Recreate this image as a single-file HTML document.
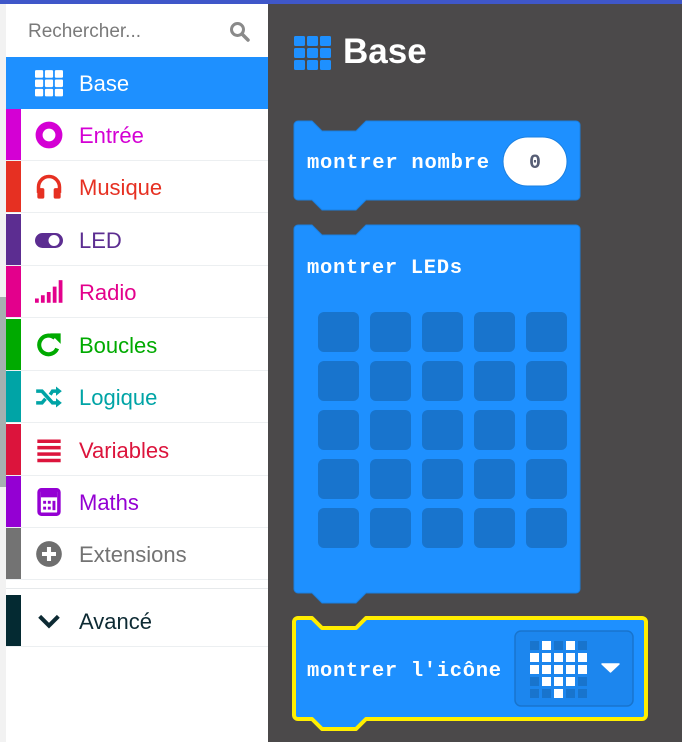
<!DOCTYPE html>
<html><head><meta charset="utf-8"><style>
*{margin:0;padding:0;box-sizing:border-box}
body{width:682px;height:742px;overflow:hidden;background:#4b494a;position:relative;font-family:"Liberation Sans",sans-serif}
#top{position:absolute;left:0;top:0;width:682px;height:4px;background:#3f57c9}
#strip{position:absolute;left:0;top:4px;width:6px;height:738px;background:#f2f2f2}
#scroll{position:absolute;left:0;top:297px;width:6px;height:190px;background:#a6b0b0}
#side{position:absolute;left:6px;top:4px;width:262px;height:738px;background:#fff}
.row{position:absolute;left:6px;width:262px;height:52px;border-bottom:1px solid #eceff1}
.row .bar{position:absolute;left:0;top:0;width:15px;height:100%}
.row .ic{position:absolute;left:29px;top:12px;width:28px;height:28px}
.row .t{position:absolute;left:73px;top:1px;line-height:52px;font-size:22px}
#search{position:absolute;left:28px;top:21px;font-size:19px;color:#7a7a7a}
</style></head><body>
<div id="top"></div><div id="strip"></div><div id="scroll"></div>
<div id="side"></div>
<div id="search">Rechercher...</div>
<svg style="position:absolute;left:229px;top:21px" width="22" height="22" viewBox="0 0 22 22"><circle cx="8.5" cy="8.5" r="6" fill="none" stroke="#8a8a8a" stroke-width="3"/><path d="M13 13l6 6" stroke="#8a8a8a" stroke-width="3.5" stroke-linecap="round"/></svg>

<div class="row" style="top:57px;background:#1e90ff;border:none"><svg class="ic" viewBox="0 0 24 24"><g fill="#fff"><rect x="0" y="1" width="7" height="6.5" rx="1"/><rect x="8.5" y="1" width="7" height="6.5" rx="1"/><rect x="17" y="1" width="7" height="6.5" rx="1"/><rect x="0" y="9" width="7" height="6.5" rx="1"/><rect x="8.5" y="9" width="7" height="6.5" rx="1"/><rect x="17" y="9" width="7" height="6.5" rx="1"/><rect x="0" y="17" width="7" height="6.5" rx="1"/><rect x="8.5" y="17" width="7" height="6.5" rx="1"/><rect x="17" y="17" width="7" height="6.5" rx="1"/></g></svg><span class="t" style="color:#fff">Base</span></div>

<div class="row" style="top:109px"><div class="bar" style="background:#d400d4"></div><svg class="ic" viewBox="0 0 24 24"><circle cx="12" cy="12" r="8.5" fill="none" stroke="#d400d4" stroke-width="6"/></svg><span class="t" style="color:#d400d4">Entrée</span></div>

<div class="row" style="top:161px"><div class="bar" style="background:#e63022"></div><svg class="ic" viewBox="0 0 24 24"><path d="M3 17v-5a9 9 0 0 1 18 0v5" fill="none" stroke="#e63022" stroke-width="3"/><rect x="2" y="13" width="6" height="9" rx="1.5" fill="#e63022"/><rect x="16" y="13" width="6" height="9" rx="1.5" fill="#e63022"/></svg><span class="t" style="color:#e63022">Musique</span></div>

<div class="row" style="top:214px"><div class="bar" style="background:#5c2d91"></div><svg class="ic" viewBox="0 0 28 28"><rect x="0" y="7" width="28" height="15" rx="7.5" fill="#5c2d91"/><circle cx="19" cy="14.5" r="5.5" fill="#fff"/></svg><span class="t" style="color:#5c2d91">LED</span></div>

<div class="row" style="top:266px"><div class="bar" style="background:#e3008c"></div><svg class="ic" viewBox="0 0 26 24"><g fill="#e3008c"><rect x="0" y="18" width="3.5" height="4"/><rect x="5.5" y="15" width="3.5" height="7"/><rect x="11" y="12" width="3.5" height="10"/><rect x="16.5" y="7" width="3.5" height="15"/><rect x="22" y="1" width="3.5" height="21"/></g></svg><span class="t" style="color:#e3008c">Radio</span></div>

<div class="row" style="top:319px"><div class="bar" style="background:#00aa00"></div><svg class="ic" viewBox="0 0 24 24"><path d="M19 15A8 8 0 1 1 17 6" fill="none" stroke="#00aa00" stroke-width="3.5"/><path d="M13 2h9v9z" fill="#00aa00"/></svg><span class="t" style="color:#00aa00">Boucles</span></div>

<div class="row" style="top:371px"><div class="bar" style="background:#00a4a6"></div><svg class="ic" viewBox="0 0 24 24"><path d="M1 7h5l9 10h4M1 17h5l3-3.5M13 10l2-3h4" fill="none" stroke="#00a4a6" stroke-width="3"/><path d="M18 3l5 4-5 4zM18 13l5 4-5 4z" fill="#00a4a6"/></svg><span class="t" style="color:#00a4a6">Logique</span></div>

<div class="row" style="top:424px"><div class="bar" style="background:#dc143c"></div><svg class="ic" viewBox="0 0 24 24"><g fill="#dc143c"><rect x="2" y="3" width="20" height="3"/><rect x="2" y="8.5" width="20" height="3"/><rect x="2" y="14" width="20" height="3"/><rect x="2" y="19.5" width="20" height="3"/></g></svg><span class="t" style="color:#dc143c">Variables</span></div>

<div class="row" style="top:476px"><div class="bar" style="background:#9400d3"></div><svg class="ic" viewBox="0 0 24 24"><rect x="3.5" y="1.5" width="17" height="21" rx="2" fill="none" stroke="#9400d3" stroke-width="3"/><rect x="5" y="3" width="14" height="5" fill="#9400d3"/><g fill="#9400d3"><rect x="7" y="11" width="2.5" height="2.5"/><rect x="11" y="11" width="2.5" height="2.5"/><rect x="15" y="11" width="2.5" height="8"/><rect x="7" y="16" width="2.5" height="2.5"/><rect x="11" y="16" width="2.5" height="2.5"/></g></svg><span class="t" style="color:#9400d3">Maths</span></div>

<div class="row" style="top:528px"><div class="bar" style="background:#737373"></div><svg class="ic" viewBox="0 0 24 24"><circle cx="12" cy="12" r="11" fill="#6f6f6f"/><path d="M12 6v12M6 12h12" stroke="#fff" stroke-width="3.5"/></svg><span class="t" style="color:#737373">Extensions</span></div>

<div style="position:absolute;left:6px;top:588px;width:262px;border-top:1px solid #e6e9eb"></div>
<div class="row" style="top:595px"><div class="bar" style="background:#042a32"></div><svg class="ic" viewBox="0 0 24 24"><path d="M4 8l8 8 8-8" fill="none" stroke="#0d2a33" stroke-width="3.5"/></svg><span class="t" style="color:#0d2a33">Avancé</span></div>

<svg style="position:absolute;left:268px;top:4px" width="414" height="738" viewBox="268 4 414 738">
<g fill="#1e90ff"><rect x="294" y="36" width="11" height="10" rx="1.5"/><rect x="307" y="36" width="11" height="10" rx="1.5"/><rect x="320" y="36" width="11" height="10" rx="1.5"/><rect x="294" y="48" width="11" height="10" rx="1.5"/><rect x="307" y="48" width="11" height="10" rx="1.5"/><rect x="320" y="48" width="11" height="10" rx="1.5"/><rect x="294" y="60" width="11" height="10" rx="1.5"/><rect x="307" y="60" width="11" height="10" rx="1.5"/><rect x="320" y="60" width="11" height="10" rx="1.5"/></g>
<text x="343" y="63" font-family="Liberation Sans" font-weight="bold" font-size="35" fill="#fff">Base</text>

<path d="M298 121h14l10 10h34l10-10h210a4 4 0 0 1 4 4v71a4 4 0 0 1-4 4h-210l-10 10h-34l-10-10h-14a4 4 0 0 1-4-4v-71a4 4 0 0 1 4-4z" fill="#1e90ff" stroke="#1a7fe0" stroke-width="1" stroke-linejoin="round"/>
<text x="307" y="168" font-family="Liberation Mono" font-weight="bold" font-size="20.5" fill="#fff" textLength="182">montrer nombre</text>
<rect x="503" y="137" width="64" height="49" rx="24.5" fill="#fff" stroke="#1a7fe0"/>
<text x="535" y="168" text-anchor="middle" font-family="Liberation Mono" font-weight="bold" font-size="20" fill="#575e75">0</text>

<path d="M298 225h14l10 10h34l10-10h210a4 4 0 0 1 4 4v360a4 4 0 0 1-4 4h-210l-10 10h-34l-10-10h-14a4 4 0 0 1-4-4v-360a4 4 0 0 1 4-4z" fill="#1e90ff" stroke="#1a7fe0" stroke-width="1" stroke-linejoin="round"/>
<text x="307" y="273" font-family="Liberation Mono" font-weight="bold" font-size="20.5" fill="#fff" textLength="155">montrer LEDs</text>
<g fill="#1874cd">
<rect x="318" y="312" width="41" height="40" rx="6"/><rect x="370" y="312" width="41" height="40" rx="6"/><rect x="422" y="312" width="41" height="40" rx="6"/><rect x="474" y="312" width="41" height="40" rx="6"/><rect x="526" y="312" width="41" height="40" rx="6"/>
<rect x="318" y="361" width="41" height="40" rx="6"/><rect x="370" y="361" width="41" height="40" rx="6"/><rect x="422" y="361" width="41" height="40" rx="6"/><rect x="474" y="361" width="41" height="40" rx="6"/><rect x="526" y="361" width="41" height="40" rx="6"/>
<rect x="318" y="410" width="41" height="40" rx="6"/><rect x="370" y="410" width="41" height="40" rx="6"/><rect x="422" y="410" width="41" height="40" rx="6"/><rect x="474" y="410" width="41" height="40" rx="6"/><rect x="526" y="410" width="41" height="40" rx="6"/>
<rect x="318" y="459" width="41" height="40" rx="6"/><rect x="370" y="459" width="41" height="40" rx="6"/><rect x="422" y="459" width="41" height="40" rx="6"/><rect x="474" y="459" width="41" height="40" rx="6"/><rect x="526" y="459" width="41" height="40" rx="6"/>
<rect x="318" y="508" width="41" height="40" rx="6"/><rect x="370" y="508" width="41" height="40" rx="6"/><rect x="422" y="508" width="41" height="40" rx="6"/><rect x="474" y="508" width="41" height="40" rx="6"/><rect x="526" y="508" width="41" height="40" rx="6"/>
</g>

<path d="M298 618h14l10 10h34l10-10h276a4 4 0 0 1 4 4v93a4 4 0 0 1-4 4h-276l-10 10h-34l-10-10h-14a4 4 0 0 1-4-4v-93a4 4 0 0 1 4-4z" fill="#1e90ff" stroke="#ffee00" stroke-width="4" stroke-linejoin="round"/>
<text x="307" y="676" font-family="Liberation Mono" font-weight="bold" font-size="20.5" fill="#fff" textLength="194">montrer l'icône</text>
<rect x="515" y="631" width="118" height="75" rx="6" fill="#1c86ee" stroke="#1874cd" stroke-width="1.5"/>
<g fill="#1874cd"><rect x="530" y="641" width="9" height="9"/><rect x="554" y="641" width="9" height="9"/><rect x="578" y="641" width="9" height="9"/><rect x="530" y="677" width="9" height="9"/><rect x="578" y="677" width="9" height="9"/><rect x="530" y="689" width="9" height="9"/><rect x="542" y="689" width="9" height="9"/><rect x="566" y="689" width="9" height="9"/><rect x="578" y="689" width="9" height="9"/></g>
<g fill="#fff"><rect x="542" y="641" width="9" height="9"/><rect x="566" y="641" width="9" height="9"/>
<rect x="530" y="653" width="9" height="9"/><rect x="542" y="653" width="9" height="9"/><rect x="554" y="653" width="9" height="9"/><rect x="566" y="653" width="9" height="9"/><rect x="578" y="653" width="9" height="9"/>
<rect x="530" y="665" width="9" height="9"/><rect x="542" y="665" width="9" height="9"/><rect x="554" y="665" width="9" height="9"/><rect x="566" y="665" width="9" height="9"/><rect x="578" y="665" width="9" height="9"/>
<rect x="542" y="677" width="9" height="9"/><rect x="554" y="677" width="9" height="9"/><rect x="566" y="677" width="9" height="9"/>
<rect x="554" y="689" width="9" height="9"/></g>
<path d="M602 664h17l-8.5 8z" fill="#fff" stroke="#fff" stroke-width="1.5" stroke-linejoin="round"/>
</svg>
</body></html>
